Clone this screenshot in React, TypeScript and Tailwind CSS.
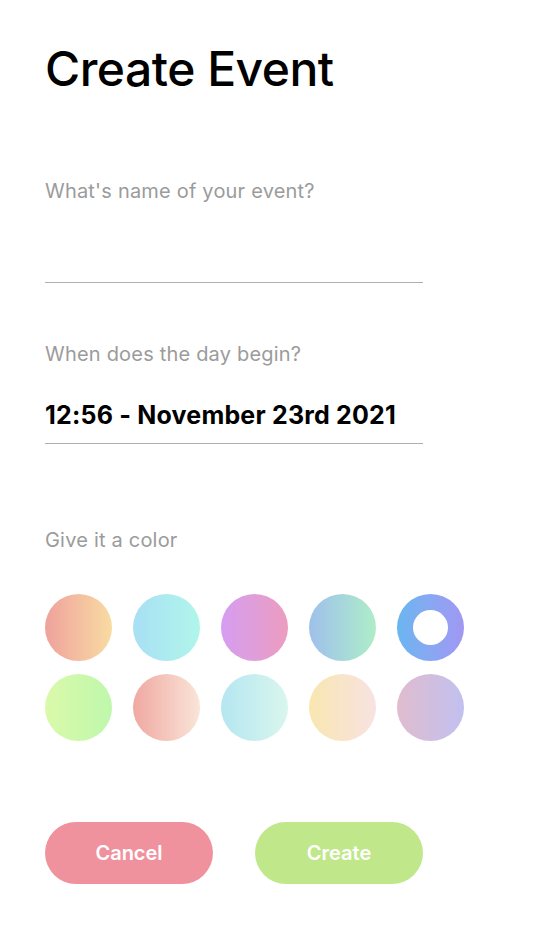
import React from "react";

const swatches = [
  "from-[#EEA29C] to-[#F8DBA2]",
  "from-[#A8DFF4] to-[#B0F6EA]",
  "from-[#D59DF1] to-[#EC9DBF]",
  "from-[#9FC0EA] to-[#AEEDC8]",
  "from-[#68B6F0] to-[#A097F4]",
  "from-[#DBF9AA] to-[#BEF8AC]",
  "from-[#EFA8A2] to-[#F9E5D8]",
  "from-[#B5E6F1] to-[#D9F6ED]",
  "from-[#F9E6AF] to-[#F8E2E2]",
  "from-[#E0BCCE] to-[#C1C0F0]",
];

export default function App() {
  return (
    <div
      className="min-h-[950px] w-full bg-white px-[45px] pt-[45px] text-black"
      style={{ fontFamily: "Inter, 'Noto Sans', sans-serif" }}
    >
      <h1 className="text-[48px] leading-[48px] font-[550] tracking-[-0.5px]">Create Event</h1>

      <div className="mt-[86px] w-[378px]">
        <div className="text-[20px] leading-[24px] tracking-[0.2px] text-[#9b9b9b]">What's name of your event?</div>
        <div className="h-[80px] border-b border-[#b0b0b0]"></div>
      </div>

      <div className="mt-[59px] w-[378px]">
        <div className="text-[20px] leading-[24px] tracking-[0.2px] text-[#9b9b9b]">When does the day begin?</div>
        <div className="mt-[33px] border-b border-[#b0b0b0] pb-[12px] text-[25px] leading-[32px] font-bold tracking-[0.2px]">
          12:56 - November 23rd 2021
        </div>
      </div>

      <div className="mt-[84px] text-[20px] leading-[24px] tracking-[0.2px] text-[#9b9b9b]">Give it a color</div>

      <div className="mt-[42px] grid w-[419px] grid-cols-5 gap-x-[21px] gap-y-[13px]">
        {swatches.map((c, i) => (
          <div
            key={i}
            className={`flex h-[67px] w-[67px] items-center justify-center rounded-full bg-linear-to-r ${c}`}
          >
            {i === 4 && <div className="h-[35px] w-[35px] rounded-full bg-white"></div>}
          </div>
        ))}
      </div>

      <div className="mt-[81px] flex gap-[42px]">
        <button className="flex h-[62px] w-[168px] items-center justify-center rounded-full bg-[#EF929E] text-[20px] font-semibold text-white">
          Cancel
        </button>
        <button className="flex h-[62px] w-[168px] items-center justify-center rounded-full bg-[#C0E88A] text-[20px] font-semibold text-white">
          Create
        </button>
      </div>
    </div>
  );
}
